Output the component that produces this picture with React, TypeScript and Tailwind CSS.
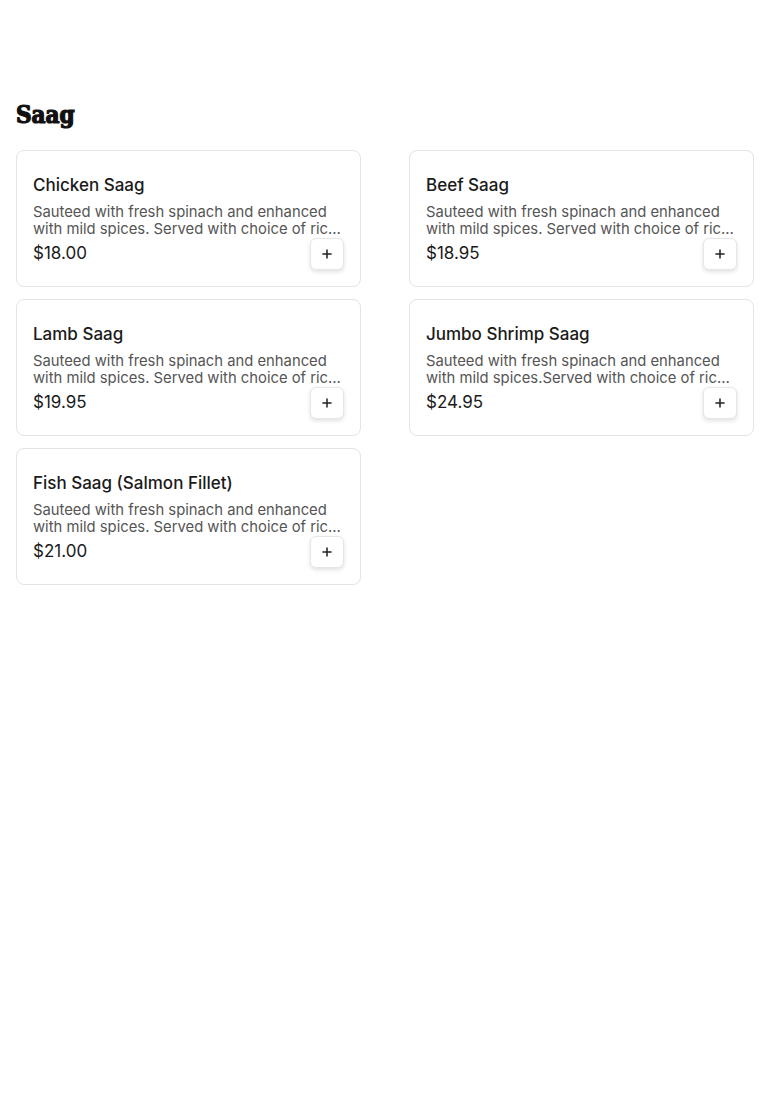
import React from 'react';
import { Plus } from 'lucide-react';

const items = [
    { name: 'Chicken Saag', desc: 'Sauteed with fresh spinach and enhanced with mild spices. Served with choice of rice or naan bread.', price: '$18.00' },
    { name: 'Beef Saag', desc: 'Sauteed with fresh spinach and enhanced with mild spices. Served with choice of rice or naan bread.', price: '$18.95' },
    { name: 'Lamb Saag', desc: 'Sauteed with fresh spinach and enhanced with mild spices. Served with choice of rice or naan bread.', price: '$19.95' },
    { name: 'Jumbo Shrimp Saag', desc: 'Sauteed with fresh spinach and enhanced with mild spices.Served with choice of rice or naan bread.', price: '$24.95' },
    { name: 'Fish Saag (Salmon Fillet)', desc: 'Sauteed with fresh spinach and enhanced with mild spices. Served with choice of rice or naan bread.', price: '$21.00' },
];

const MenuCard = ({ item }: { item: typeof items[number] }) => (
    <div className="bg-white rounded-lg border border-[#e4e4e4] px-4 pt-[22px] pb-4">
        <h3 className="text-[17px] leading-6 font-medium text-[#1a1a1a]">{item.name}</h3>
        <p className="mt-[7px] text-[14.8px] leading-[17px] text-[#555] line-clamp-2">{item.desc}</p>
        <div className="flex items-center justify-between">
            <span className="text-[17px] text-[#1a1a1a]">{item.price}</span>
            <button className="w-[34px] h-8 flex items-center justify-center rounded-md border border-[#e6e6e6] bg-white shadow-[0_2px_4px_rgba(0,0,0,0.12)]">
                <Plus className="w-[14px] h-[14px] text-[#222]" strokeWidth={2.6} />
            </button>
        </div>
    </div>
);

export default function App() {
    return (
        <div className="min-h-[1112px] bg-white px-4 pt-[98px]" style={{ fontFamily: 'Inter, "Noto Sans", sans-serif' }}>
            <h2 className="text-[24px] leading-[34px] font-bold text-[#111] [-webkit-text-stroke:1.2px_#111]" style={{ fontFamily: '"DejaVu Serif Condensed", "DejaVu Serif", serif' }}>Saag</h2>
            <div className="mt-[18px] grid grid-cols-2 gap-x-12 gap-y-3">
                {items.map(it => <MenuCard key={it.name} item={it} />)}
            </div>
        </div>
    );
}
